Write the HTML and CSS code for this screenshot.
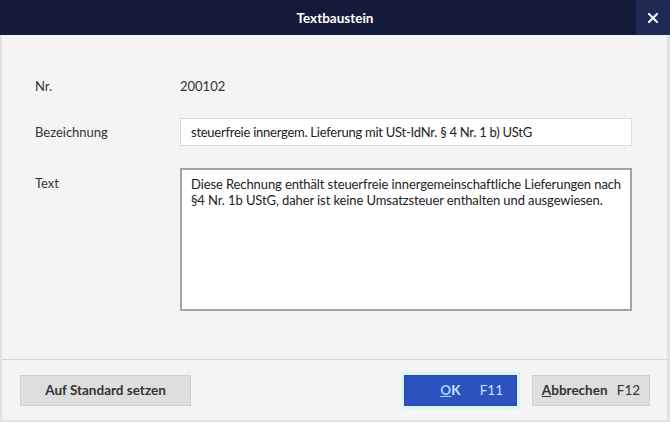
FILE: index.html
```html
<!DOCTYPE html>
<html lang="de">
<head>
    <meta charset="UTF-8">
    <meta name="viewport" content="width=device-width, initial-scale=1.0">
    <title>Textbaustein</title>
    <link rel="stylesheet" href="styles.css">
</head>
<body>
    <div class="dialog">
        <div class="titlebar">
            <span class="title">Textbaustein</span>
            <button class="close-btn" aria-label="Schließen">
                <svg width="10" height="10" viewBox="0 0 10 10">
                    <path d="M1 1 L9 9 M9 1 L1 9" stroke="#ffffff" stroke-width="2" stroke-linecap="square"/>
                </svg>
            </button>
        </div>
        <div class="content">
            <div class="form">
                <div class="row row-nr">
                    <label>Nr.</label>
                    <span class="value">200102</span>
                </div>
                <div class="row row-name">
                    <label for="name">Bezeichnung</label>
                    <input type="text" id="name" value="steuerfreie innergem. Lieferung mit USt-IdNr. § 4 Nr. 1 b) UStG">
                </div>
                <div class="row row-text">
                    <label for="text">Text</label>
                    <textarea id="text">Diese Rechnung enthält steuerfreie innergemeinschaftliche Lieferungen nach §4 Nr. 1b UStG, daher ist keine Umsatzsteuer enthalten und ausgewiesen.</textarea>
                </div>
            </div>
            <div class="footer">
                <button class="btn btn-default">Auf Standard setzen</button>
                <div class="footer-right">
                    <button class="btn btn-primary"><span class="key">O</span>K <span class="fkey">F11</span></button>
                    <button class="btn btn-cancel"><span class="key">A</span>bbrechen <span class="fkey">F12</span></button>
                </div>
            </div>
        </div>
    </div>
</body>
</html>
```

FILE: styles.css
```css
* {
    margin: 0;
    padding: 0;
    box-sizing: border-box;
    font-family: 'Lato', 'Noto Sans', sans-serif;
}

body {
    width: 670px;
    height: 422px;
    overflow: hidden;
    background: #f4f4f4;
}

.dialog {
    display: flex;
    flex-direction: column;
    width: 670px;
    height: 422px;
}

.titlebar {
    position: relative;
    height: 35px;
    background: #141b3a;
    display: flex;
    justify-content: center;
    align-items: center;
    flex-shrink: 0;
}

.title {
    color: #ffffff;
    font-size: 13.5px;
    font-weight: 700;
}

.close-btn {
    position: absolute;
    right: 0;
    top: 0;
    width: 34px;
    height: 35px;
    border: none;
    background: #1f2a54;
    display: flex;
    justify-content: center;
    align-items: center;
    cursor: pointer;
}

.content {
    flex: 1;
    display: flex;
    flex-direction: column;
    background: #f4f4f4;
    border-left: 2px solid #e2e2e2;
    border-right: 3px solid #e2e2e2;
    border-bottom: 2px solid #e2e2e2;
}

.form {
    flex: 1;
    padding: 38px 35px 0 33px;
}

.row {
    display: grid;
    grid-template-columns: 145px 1fr;
    align-items: center;
    color: #333333;
    font-size: 13px;
}

.row label {
    color: #333333;
}

.row-nr {
    height: 26px;
    margin-bottom: 19px;
}

.row-name input {
    height: 28px;
    border: 1px solid #dadada;
    background: #ffffff;
    padding: 0 10px;
    font-size: 13px;
    letter-spacing: -0.25px;
    color: #222222;
    outline: none;
}

.row-text {
    margin-top: 22px;
    align-items: start;
}

.row-text label {
    padding-top: 7px;
}

.row-text textarea {
    height: 143px;
    border: 2px solid #a3a3a3;
    background: #ffffff;
    padding: 6px 4px 6px 9px;
    font-size: 13px;
    letter-spacing: -0.1px;
    line-height: 16px;
    color: #222222;
    resize: none;
    outline: none;
}

.footer {
    height: 61px;
    border-top: 1px solid #d4d4d4;
    display: flex;
    justify-content: space-between;
    align-items: center;
    padding: 0 17px 0 18px;
}

.footer-right {
    display: flex;
    gap: 15px;
}

.btn {
    height: 31px;
    font-size: 13.5px;
    font-weight: 700;
    border: 1px solid #cfcfcf;
    background: #dedede;
    color: #333333;
    cursor: pointer;
}

.btn-default {
    width: 171px;
}

.btn-primary {
    width: 113px;
    background: #2b52be;
    border: 1px solid #3642b4;
    color: #cfe3ff;
    box-shadow: 0 0 0 3px #d9f6ef;
    text-align: right;
    padding-right: 13px;
}

.btn-primary .key {
    color: #a8d4ff;
}

.btn-cancel {
    width: 118px;
}

.key {
    text-decoration: underline;
}

.fkey {
    font-weight: 400;
    margin-left: 16px;
}

.btn-cancel .fkey {
    margin-left: 6px;
}
```
